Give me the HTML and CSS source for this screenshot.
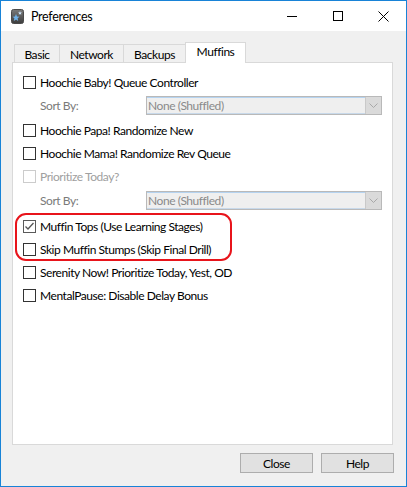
FILE: index.html
```html
<!DOCTYPE html>
<html>
<head>
<meta charset="utf-8">
<link rel="stylesheet" href="styles.css">
</head>
<body>
<div class="window">
  <div class="titlebar">
    <svg class="app-icon" width="13" height="15" viewBox="0 0 13 15">
      <defs>
        <linearGradient id="ig" x1="0" y1="0" x2="0" y2="1">
          <stop offset="0" stop-color="#7a7a7a"/>
          <stop offset="1" stop-color="#3c3c3c"/>
        </linearGradient>
      </defs>
      <rect x="0.5" y="0.5" width="12" height="14" rx="2" fill="url(#ig)" stroke="#4a4a4a"/>
      <path d="M5 5 L6 7.5 L8.5 7.8 L6.6 9.3 L7.2 12 L5 10.5 L2.8 12 L3.4 9.3 L1.6 7.8 L4 7.5 Z" fill="#6fb2ea"/>
      <path d="M9 2 L9.6 3.4 L11 3.5 L9.9 4.4 L10.3 5.8 L9 5 L7.7 5.8 L8.1 4.4 L7 3.5 L8.4 3.4 Z" fill="#cfe6fa"/>
    </svg>
    <span class="title">Preferences</span>
    <div class="caption-buttons">
      <div class="cap-btn">
        <svg width="10" height="10" viewBox="0 0 10 10"><path d="M0 5.5 H10" stroke="#000" stroke-width="1"/></svg>
      </div>
      <div class="cap-btn">
        <svg width="10" height="10" viewBox="0 0 10 10"><rect x="0.5" y="0.5" width="9" height="9" fill="none" stroke="#000" stroke-width="1"/></svg>
      </div>
      <div class="cap-btn">
        <svg width="11" height="11" viewBox="0 0 11 11"><path d="M0.5 0.5 L10.5 10.5 M10.5 0.5 L0.5 10.5" stroke="#000" stroke-width="1"/></svg>
      </div>
    </div>
  </div>

  <div class="body">
    <div class="tabstrip">
      <div class="tab tab-basic">Basic</div>
      <div class="tab tab-network">Network</div>
      <div class="tab tab-backups">Backups</div>
      <div class="tab tab-muffins selected">Muffins</div>
    </div>

    <div class="panel">
      <div class="row">
        <span class="cb"></span><span class="label">Hoochie Baby! Queue Controller</span>
      </div>
      <div class="sort-row first-sort">
        <span class="sort-label">Sort By:</span>
        <div class="combo"><span class="combo-text">None (Shuffled)</span><span class="combo-arrow"><svg width="9" height="5" viewBox="0 0 9 5"><path d="M0.5 0.5 L4.5 4.5 L8.5 0.5" fill="none" stroke="#a8a8a8" stroke-width="1"/></svg></span></div>
      </div>
      <div class="row">
        <span class="cb"></span><span class="label">Hoochie Papa! Randomize New</span>
      </div>
      <div class="row">
        <span class="cb"></span><span class="label">Hoochie Mama! Randomize Rev Queue</span>
      </div>
      <div class="row disabled">
        <span class="cb"></span><span class="label">Prioritize Today?</span>
      </div>
      <div class="sort-row second-sort">
        <span class="sort-label">Sort By:</span>
        <div class="combo"><span class="combo-text">None (Shuffled)</span><span class="combo-arrow"><svg width="9" height="5" viewBox="0 0 9 5"><path d="M0.5 0.5 L4.5 4.5 L8.5 0.5" fill="none" stroke="#a8a8a8" stroke-width="1"/></svg></span></div>
      </div>
      <div class="row">
        <span class="cb checked"><svg width="11" height="11" viewBox="0 0 11 11"><path d="M1.5 5.5 L4 8 L9.5 2" fill="none" stroke="#555" stroke-width="1.3"/></svg></span><span class="label">Muffin Tops (Use Learning Stages)</span>
      </div>
      <div class="row">
        <span class="cb"></span><span class="label">Skip Muffin Stumps (Skip Final Drill)</span>
      </div>
      <div class="row">
        <span class="cb"></span><span class="label">Serenity Now! Prioritize Today, Yest, OD</span>
      </div>
      <div class="row">
        <span class="cb"></span><span class="label">MentalPause: Disable Delay Bonus</span>
      </div>
      <div class="highlight"></div>
    </div>

    <div class="footer">
      <div class="btn">Close</div>
      <div class="btn">Help</div>
    </div>
  </div>
</div>
</body>
</html>
```

FILE: styles.css
```css
* { box-sizing: border-box; }
html, body { margin: 0; padding: 0; }
body {
  font-family: Lato, "Noto Sans", sans-serif;
  font-size: 12px;
  letter-spacing: -0.45px;
  color: #000;
  background: #fff;
}
.window {
  width: 407px;
  height: 487px;
  border: 1px solid #1883d7;
  background: #f0f0f0;
  display: flex;
  flex-direction: column;
}
.titlebar {
  height: 30px;
  background: #fff;
  display: flex;
  align-items: center;
  flex-shrink: 0;
}
.app-icon { margin-left: 10px; margin-top: 1px; }
.title { margin-left: 7px; font-size: 12.5px; margin-top: 1px; letter-spacing: -0.3px; }
.caption-buttons { margin-left: auto; display: flex; height: 30px; }
.cap-btn {
  width: 46px;
  height: 30px;
  display: flex;
  align-items: center;
  justify-content: center;
}
.cap-btn:last-child { width: 45px; }
.cap-btn svg { display: block; }

.body {
  flex: 1;
  display: flex;
  flex-direction: column;
  padding: 11px 13px 13px 11px;
}
.tabstrip {
  height: 20px;
  display: flex;
  align-items: flex-end;
  padding-left: 2px;
}
.tab {
  height: 18px;
  border: 1px solid #d9d9d9;
  border-bottom: none;
  background: #f0f0f0;
  display: flex;
  align-items: center;
  justify-content: center;
  padding-top: 1px;
  margin-left: -1px;
}
.tab-basic { width: 46px; margin-left: 0; }
.tab-network { width: 65px; }
.tab-backups { width: 63px; }
.tab-muffins { width: 61px; }
.tab.selected {
  height: 21px;
  margin-bottom: -1px;
  background: #fff;
  position: relative;
  z-index: 1;
  padding-top: 0;
  padding-bottom: 3px;
}

.panel {
  height: 383px;
  background: #fff;
  border: 1px solid #d9d9d9;
  position: relative;
  padding: 8px 0 0 10px;
}
.row {
  height: 23px;
  display: flex;
  align-items: center;
}
.cb {
  width: 13px;
  height: 13px;
  border: 1px solid #333;
  background: #fff;
  display: flex;
  align-items: center;
  justify-content: center;
  flex-shrink: 0;
}
.cb svg { display: block; }
.cb.checked { border-color: #5a5a5a; }
.label { margin-left: 4px; white-space: nowrap; }
.row.disabled .cb { border-color: #cccccc; }
.row.disabled .label { color: #a0a0a0; }

.sort-row {
  height: 23px;
  display: flex;
  align-items: center;
  padding-left: 17px;
}
.first-sort { margin-bottom: 2px; }
.second-sort { margin-top: 1px; margin-bottom: 3px; }
.sort-label { color: #7a7a7a; width: 106px; }
.combo {
  width: 236px;
  height: 19px;
  border: 1px solid #b9b9b9;
  background: #efefef;
  box-shadow: inset 0 1px 0 #b5d3f0, inset 0 -1px 0 #c8d9ea;
  display: flex;
  align-items: center;
}
.combo-text { color: #8a8a8a; padding-left: 1px; flex: 1; }
.combo-arrow {
  width: 16px;
  height: 17px;
  background: #dadada;
  border-left: 1px solid #c9c9c9;
  display: flex;
  align-items: center;
  justify-content: center;
}
.combo-arrow svg { display: block; }

.highlight {
  position: absolute;
  left: 2px;
  top: 150px;
  width: 217px;
  height: 48px;
  border: 2px solid #e8141b;
  border-radius: 11px;
}

.footer {
  margin-top: 8px;
  display: flex;
  justify-content: flex-end;
  gap: 8px;
  margin-right: -1px;
}
.btn {
  width: 73px;
  height: 20px;
  background: #e1e1e1;
  border: 1px solid #adadad;
  display: flex;
  align-items: center;
  justify-content: center;
}
```
